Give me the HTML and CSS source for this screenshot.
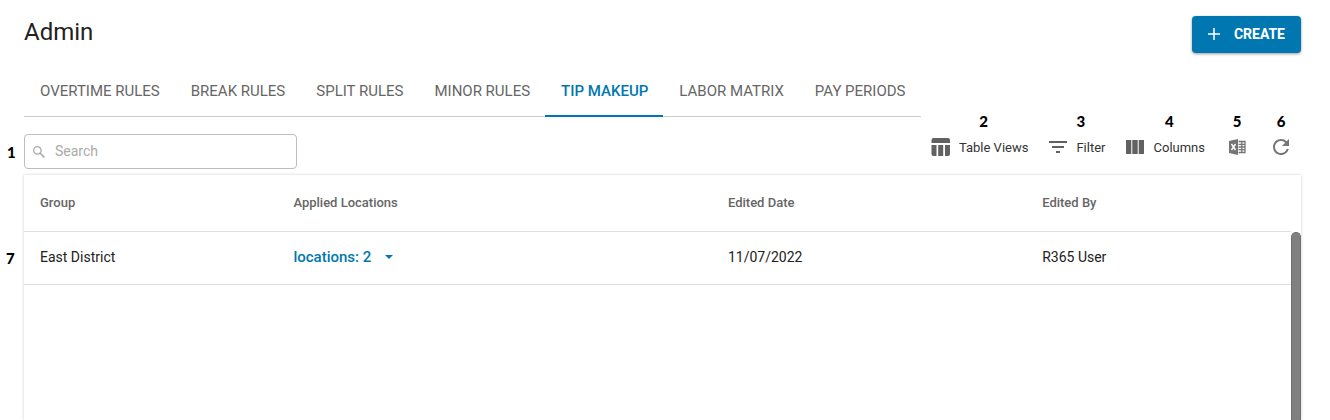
FILE: index.html
```html
<!DOCTYPE html>
<html lang="en">
<head>
    <meta charset="UTF-8">
    <meta name="viewport" content="width=device-width, initial-scale=1.0">
    <title>Admin</title>
    <link rel="stylesheet" href="styles.css">
</head>
<body>
    <header class="page-header">
        <h1>Admin</h1>
        <button type="button" class="create">
            <svg viewBox="0 0 12 12" width="12" height="12"><path d="M6 0v12M0 6h12" stroke="currentColor" stroke-width="1.5"/></svg>
            CREATE
        </button>
    </header>

    <nav class="tabs">
        <a href="#overtime">OVERTIME RULES</a>
        <a href="#break">BREAK RULES</a>
        <a href="#split">SPLIT RULES</a>
        <a href="#minor">MINOR RULES</a>
        <a href="#tip" class="active" aria-current="page">TIP MAKEUP</a>
        <a href="#labor">LABOR MATRIX</a>
        <a href="#pay">PAY PERIODS</a>
    </nav>

    <div class="toolbar">
        <div class="search">
            <span class="callout side">1</span>
            <svg viewBox="0 0 12 12" width="12" height="12" fill="none" stroke="currentColor"><circle cx="4.4" cy="4.4" r="3.7" stroke-width="1.3"/><path d="M7.2 7.2l4.2 4.2" stroke-width="1.6"/></svg>
            <input type="text" placeholder="Search" aria-label="Search">
        </div>

        <div class="tools">
            <button type="button">
                <span class="callout">2</span>
                <svg viewBox="0 0 20 20" width="20" height="20" fill="currentColor"><path d="M2.500 1h14.500a2 2 0 0 1 2 2v3H0.500V3a2 2 0 0 1 2-2zM.5 8h5v11h-3a2 2 0 0 1-2-2zM7.200 8h5v11h-5zM14 8h5v9a2 2 0 0 1-2 2h-3z"/></svg>
                Table Views
            </button>
            <button type="button">
                <span class="callout">3</span>
                <svg viewBox="0 0 20 20" width="20" height="20" fill="currentColor"><path d="M1 4h18v2H1zM4 9h12v2H4zM8 14h4v2H8z"/></svg>
                Filter
            </button>
            <button type="button">
                <span class="callout">4</span>
                <svg viewBox="0 0 20 20" width="20" height="20" fill="currentColor"><path d="M0 3h5.300v14H0zM6.300 3h5.400v14H6.300zM12.700 3h5.300v14h-5.300z"/></svg>
                Columns
            </button>
            <button type="button" class="icon-only" aria-label="Export to Excel">
                <span class="callout">5</span>
                <svg viewBox="0 0 20 20" width="20" height="20"><path d="M2 4l9-2v16l-9-2z" fill="#757575"/><path d="M4.500 7l4 6M8.500 7l-4 6" stroke="#fff" stroke-width="1.4"/><path d="M11.500 4.500h6.500v11h-6.500M14.800 4.500v11M11.500 7.300H18M11.500 10H18M11.500 12.700H18" fill="none" stroke="#757575" stroke-width="1.300"/></svg>
            </button>
            <button type="button" class="icon-only" aria-label="Refresh">
                <span class="callout">6</span>
                <svg viewBox="0 0 24 24" width="24" height="24" fill="#757575"><path d="M17.650 6.350A7.958 7.958 0 0 0 12 4c-4.420 0-7.990 3.580-7.990 8s3.570 8 7.990 8c3.730 0 6.840-2.550 7.730-6h-2.080A5.990 5.990 0 0 1 12 18c-3.310 0-6-2.690-6-6s2.690-6 6-6c1.660 0 3.140.69 4.220 1.780L13 11h7V4z"/></svg>
            </button>
        </div>
    </div>

    <main class="card">
        <table>
            <thead>
                <tr>
                    <th class="group">Group</th>
                    <th class="locations">Applied Locations</th>
                    <th class="date">Edited Date</th>
                    <th>Edited By</th>
                </tr>
            </thead>
            <tbody>
                <tr>
                    <td><span class="callout side">7</span>East District</td>
                    <td>
                        <button type="button" class="dropdown">
                            locations: 2
                            <svg viewBox="0 0 8 4" width="8" height="4" fill="currentColor"><path d="M0 0h8L4 4z"/></svg>
                        </button>
                    </td>
                    <td>11/07/2022</td>
                    <td>R365 User</td>
                </tr>
            </tbody>
        </table>
        <div class="scrollbar"></div>
    </main>
</body>
</html>
```
FILE: styles.css
```css
* {
    box-sizing: border-box;
}
body {
    display: flex;
    flex-direction: column;
    min-height: 100vh;
    margin: 0;
    padding: 16px 29px 0 24px;
    background-color: #fff;
    color: #212121;
    font-family: Roboto, sans-serif;
    font-size: 14px;
}
button {
    border: none;
    padding: 0;
    background: none;
    font-family: inherit;
    cursor: pointer;
}
.page-header {
    display: flex;
    justify-content: space-between;
    align-items: flex-start;
}
h1 {
    margin: 0;
    font-size: 24px;
    font-weight: 400;
    line-height: 32px;
}
.create {
    display: flex;
    align-items: center;
    gap: 14px;
    height: 37px;
    padding: 0 16px 2px;
    border-radius: 4px;
    background-color: #0077b0;
    color: #fff;
    font-size: 14px;
    font-weight: 700;
    line-height: 20px;
    box-shadow: 0 1px 3px rgba(0, 0, 0, 0.4);
}
.tabs {
    display: flex;
    align-self: flex-start;
    margin-top: 12px;
    border-bottom: 1px solid #ccc;
}
.tabs a {
    height: 52px;
    margin-bottom: -1px;
    padding: 0 15px 0 16px;
    border-bottom: 2px solid transparent;
    color: #666;
    font-size: 15px;
    line-height: 52px;
    text-decoration: none;
}
.tabs a.active {
    border-color: #0077b0;
    color: #0077b0;
    font-weight: 500;
}
.toolbar {
    display: flex;
    justify-content: space-between;
    align-items: flex-start;
    margin-top: 17px;
}
.search {
    position: relative;
    display: flex;
    align-items: center;
    gap: 10px;
    width: 273px;
    height: 35px;
    padding: 0 8px;
    border: 1px solid #bdbdbd;
    border-radius: 4px;
    color: #aaa;
}
.search input {
    flex: 1;
    min-width: 0;
    border: none;
    padding: 0 0 2px;
    outline: none;
    font-family: inherit;
    font-size: 14px;
}
.search input::placeholder {
    color: #aaa;
}
.tools {
    display: flex;
    gap: 20px;
    padding-right: 8px;
}
.tools button {
    position: relative;
    display: flex;
    align-items: center;
    gap: 8px;
    height: 26px;
    color: #333;
    font-size: 13px;
}
.tools svg {
    color: #616161;
}
.tools .icon-only {
    justify-content: center;
    width: 24px;
}

/* Numbered callouts */
.callout {
    position: absolute;
    bottom: 29px;
    left: 8px;
    right: 0;
    color: #000;
    font-family: Lato, sans-serif;
    font-size: 15px;
    font-weight: 900;
    line-height: 20px;
    text-align: center;
}
.icon-only .callout {
    left: 0;
}
.callout.side {
    top: 50%;
    bottom: auto;
    left: -18px;
    right: auto;
    margin-top: -10px;
}

.card {
    display: flex;
    flex: 1;
    margin-top: 6px;
    box-shadow: 0 0 3px rgba(0, 0, 0, 0.2);
}
table {
    flex: 1;
    align-self: flex-start;
    border-collapse: separate;
    border-spacing: 0;
    table-layout: fixed;
}
th, td {
    position: relative;
    padding: 0 16px 2px;
    border-bottom: 1px solid #e0e0e0;
    text-align: left;
}
th {
    height: 57px;
    color: #666;
    font-size: 13px;
    font-weight: 500;
}
td {
    height: 53px;
}
.group {
    width: 20%;
}
.locations {
    width: 34.3%;
}
.date {
    width: 24.8%;
}
.dropdown {
    display: flex;
    align-items: center;
    gap: 14px;
    color: #0077b0;
    font-size: 15px;
    font-weight: 500;
}
.scrollbar {
    width: 10px;
    margin-top: 57px;
    border: 1px solid #707070;
    border-bottom: none;
    border-radius: 5px 5px 0 0;
    background-color: #808080;
}
```
